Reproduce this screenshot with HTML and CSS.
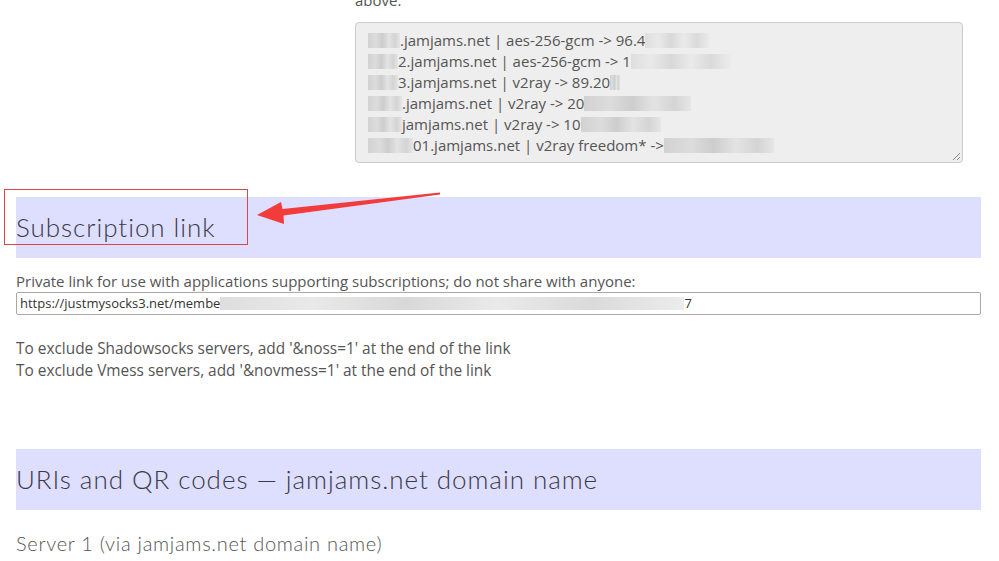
FILE: index.html
```html
<!DOCTYPE html>
<html lang="en">
<head>
    <meta charset="UTF-8">
    <meta name="viewport" content="width=device-width, initial-scale=1.0">
    <title>Service details</title>
    <link rel="stylesheet" href="styles.css">
</head>
<body>
    <div class="container">
        <div class="server-block">
            <div class="server-col">
                <p class="note">above.</p>
                <div class="server-list">
                    <div class="line"><span class="blur w32"></span>.jamjams.net | aes-256-gcm -&gt; 96.4<span class="blur light w65"></span></div>
                    <div class="line"><span class="blur w30"></span>2.jamjams.net | aes-256-gcm -&gt; 1<span class="blur light w100"></span></div>
                    <div class="line"><span class="blur w30"></span>3.jamjams.net | v2ray -&gt; 89.20<span class="blur w10"></span></div>
                    <div class="line"><span class="blur w34"></span>.jamjams.net | v2ray -&gt; 20<span class="blur w107"></span></div>
                    <div class="line"><span class="blur w34"></span>jamjams.net | v2ray -&gt; 10<span class="blur w80"></span></div>
                    <div class="line"><span class="blur w45"></span>01.jamjams.net | v2ray freedom* -&gt;<span class="blur w110"></span></div>
                    <svg class="grip" width="9" height="9" viewBox="0 0 9 9">
                        <path d="M8 1 L1 8 M8 5 L5 8" stroke="#888" stroke-width="1"/>
                    </svg>
                </div>
            </div>
        </div>

        <h2 class="section-title">Subscription link</h2>
        <p class="small">Private link for use with applications supporting subscriptions; do not share with anyone:</p>
        <div class="link-box">https://justmysocks3.net/membe<span class="blur light w464"></span>7</div>

        <div class="hints">
            <p>To exclude Shadowsocks servers, add '&amp;noss=1' at the end of the link</p>
            <p>To exclude Vmess servers, add '&amp;novmess=1' at the end of the link</p>
        </div>

        <h2 class="section-title">URIs and QR codes — jamjams.net domain name</h2>
        <h3 class="server-name">Server 1 (via jamjams.net domain name)</h3>
    </div>

    <!-- screenshot annotation -->
    <div class="mark-box"></div>
    <svg class="mark-arrow" width="999" height="561" viewBox="0 0 999 561">
        <polygon points="257,215 281,202 282.5,209 440,192.5 440,194.5 283.5,215.5 284,224" fill="#f23b3b"/>
    </svg>
</body>
</html>
```

FILE: styles.css
```css
body {
    font-family: 'Open Sans', 'Liberation Sans', sans-serif;
    color: #555;
    background-color: #fff;
    margin: 0;
    padding: 0;
}

.container {
    margin-top: -10px;
    padding: 0 18px 0 16px;
}

p {
    margin: 0;
}

.server-block {
    display: grid;
    grid-template-columns: 339px 608px;
}

.server-col {
    grid-column: 2;
}

.note {
    font-size: 15px;
    line-height: 21px;
    margin-bottom: 11px;
}

.server-list {
    position: relative;
    height: 141px;
    box-sizing: border-box;
    padding: 7px 12px;
    background-color: #eee;
    border: 1px solid #ccc;
    border-radius: 4px;
    font-size: 15px;
    line-height: 21px;
    color: #555;
}

.line {
    white-space: nowrap;
}

.grip {
    position: absolute;
    right: 1px;
    bottom: 1px;
}

.blur {
    display: inline-block;
    height: 15px;
    vertical-align: -2px;
    background: linear-gradient(90deg, #d2d2d2, #dcdcdc 25%, #cdcdcd 45%, #e3e3e3 65%, #d4d4d4 85%, #e6e6e6);
}

.blur.light {
    background: linear-gradient(90deg, #dedede, #e9e9e9 20%, #d8d8d8 40%, #eaeaea 60%, #dadada 80%, #ececec);
}

.w10 { width: 10px; }
.w30 { width: 30px; }
.w32 { width: 32px; }
.w34 { width: 34px; }
.w45 { width: 45px; }
.w65 { width: 65px; }
.w80 { width: 80px; }
.w100 { width: 100px; }
.w107 { width: 107px; }
.w110 { width: 110px; }
.w464 { width: 464px; height: 13px; }

.section-title {
    margin: 34px 0 0;
    padding: 12px 0;
    background-color: #dedeff;
    font-family: Lato, 'Open Sans', sans-serif;
    font-weight: 300;
    font-size: 26px;
    line-height: 37px;
    letter-spacing: 0.95px;
    color: #3a3a4a;
}

.small {
    margin-top: 13px;
    font-size: 15px;
    line-height: 20px;
}

.link-box {
    margin-top: 1px;
    height: 23px;
    box-sizing: border-box;
    padding: 0 3px;
    border: 1px solid #a9a9a9;
    border-radius: 2px;
    font-size: 13px;
    line-height: 21px;
    color: #333;
    white-space: nowrap;
    overflow: hidden;
}

.hints {
    margin-top: 23px;
    font-size: 15.4px;
    line-height: 22px;
}

.hints + .section-title {
    margin-top: 67px;
}

.server-name {
    margin: 20px 0 0;
    font-family: Lato, 'Open Sans', sans-serif;
    font-weight: 300;
    font-size: 20px;
    line-height: 26px;
    letter-spacing: 0.7px;
    color: #555;
}

.mark-box {
    position: absolute;
    left: 4px;
    top: 189px;
    width: 242px;
    height: 54px;
    border: 1px solid #d9474b;
}

.mark-arrow {
    position: absolute;
    left: 0;
    top: 0;
    pointer-events: none;
}
```
